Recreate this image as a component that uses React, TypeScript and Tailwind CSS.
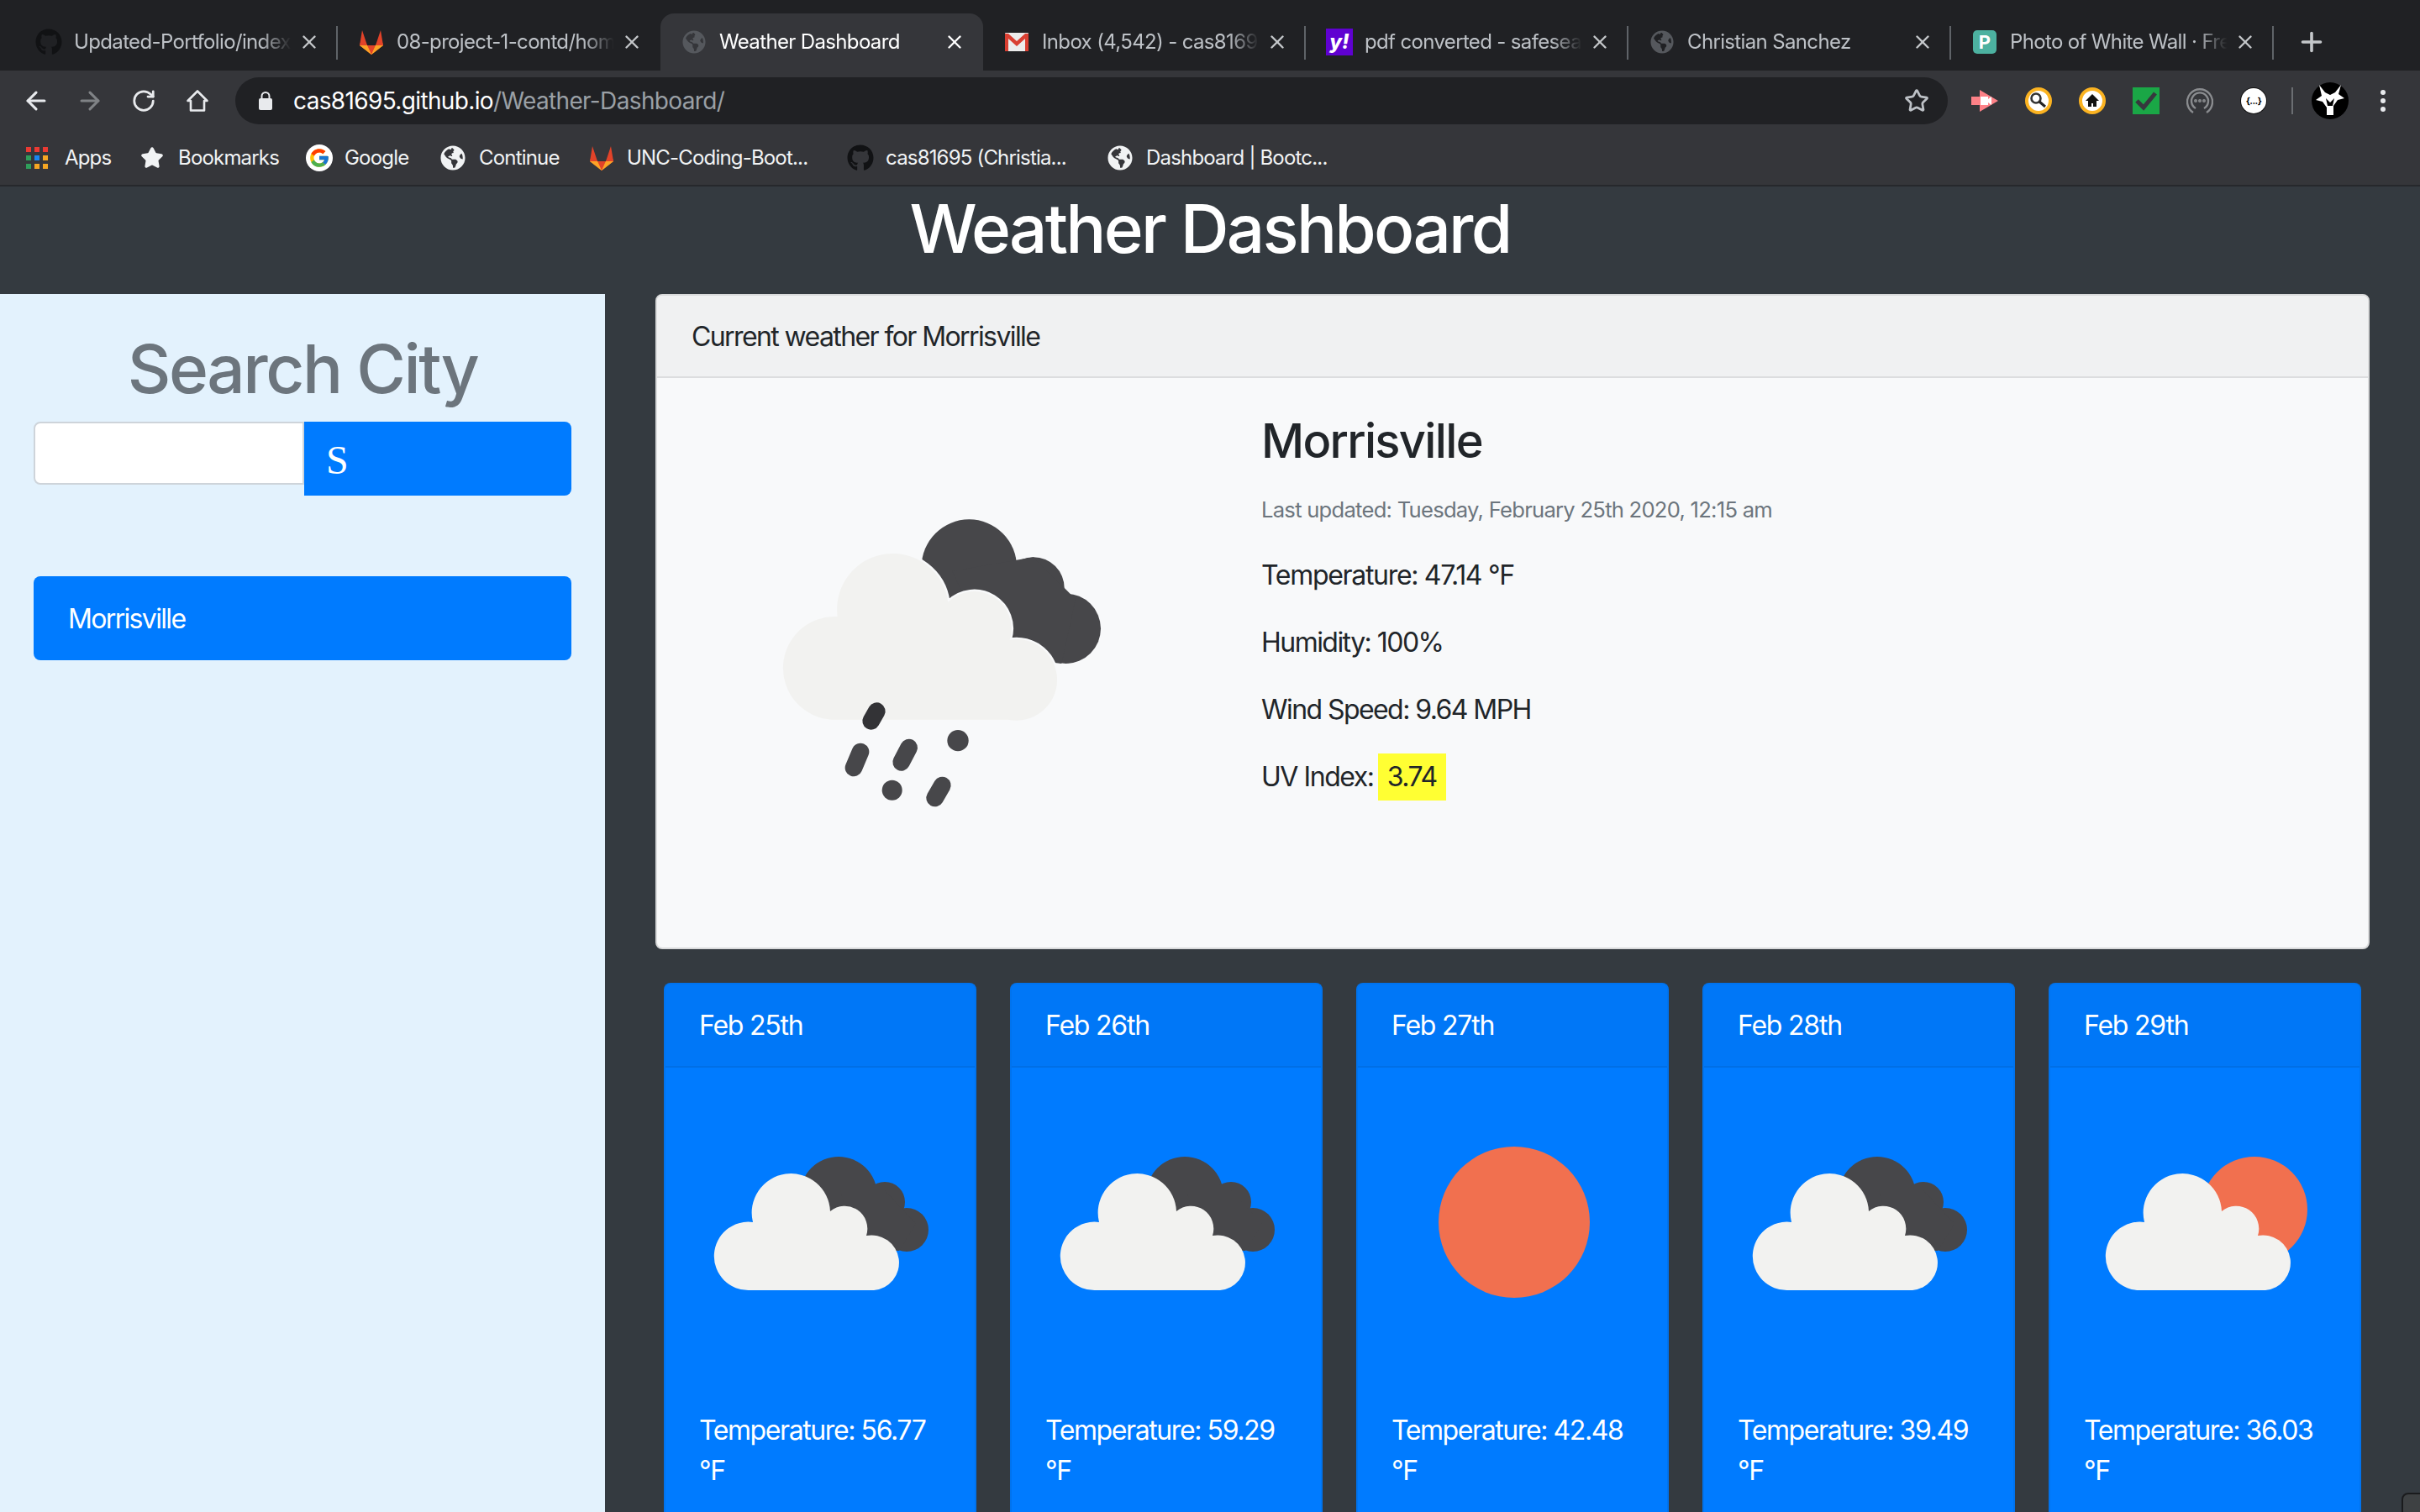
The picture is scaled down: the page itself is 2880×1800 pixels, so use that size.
import React from 'react';
import { ArrowLeft, ArrowRight, RotateCw, Star, Plus, X } from 'lucide-react';
import { FaGithub, FaGlobeAmericas } from 'react-icons/fa';
import { FcGoogle } from 'react-icons/fc';

const font = { fontFamily: 'Inter, "Liberation Sans", sans-serif' };

const GitlabIcon = ({ className }: { className?: string }) => (
  <svg viewBox="0 0 32 32" className={className}>
    <polygon points="16,31 2,20 5,10 11,20 21,20 27,10 30,20" fill="#fc6d26" />
    <polygon points="16,31 11,20 21,20" fill="#e24329" />
    <polygon points="2,20 16,31 11,20" fill="#fca326" />
    <polygon points="30,20 16,31 21,20" fill="#fca326" />
    <polygon points="5,2 11,20 2,20" fill="#e24329" />
    <polygon points="27,2 21,20 30,20" fill="#e24329" />
  </svg>
);

const GmailIcon = () => (
  <svg viewBox="0 0 28 24" className="h-[24px] w-[28px]">
    <rect x="0" y="1" width="28" height="22" rx="1" fill="#ececec" />
    <path d="M0 23V2h4l10 9 10-9h4v21h-4V8l-10 9L4 8v15z" fill="#d93f32" />
  </svg>
);

const YahooIcon = () => (
  <div className="flex h-[32px] w-[32px] items-center justify-center bg-[#5f01d1] text-[24px] font-extrabold leading-none text-white italic">
    y!
  </div>
);

const PexelsIcon = () => (
  <div className="flex h-[28px] w-[28px] items-center justify-center rounded-[5px] bg-[#4cb1a0] text-[22px] font-bold leading-none text-white">
    P
  </div>
);

const tabs = [
  { title: 'Updated-Portfolio/index', icon: <FaGithub className="h-[32px] w-[32px] text-[#111214]" /> },
  { title: '08-project-1-contd/hom', noSep: true, icon: <GitlabIcon className="h-[32px] w-[32px]" /> },
  { title: 'Weather Dashboard', active: true, noSep: true, icon: <FaGlobeAmericas className="h-[28px] w-[28px] text-[#55585d]" /> },
  { title: 'Inbox (4,542) - cas8169', icon: <GmailIcon /> },
  { title: 'pdf converted - safesea', icon: <YahooIcon /> },
  { title: 'Christian Sanchez', icon: <FaGlobeAmericas className="h-[28px] w-[28px] text-[#55585d]" /> },
  { title: 'Photo of White Wall · Fre', icon: <PexelsIcon /> },
];

const bookmarks = [
  { label: 'Apps', width: 'w-[135px]', icon: <AppsIcon /> },
  { label: 'Bookmarks', width: 'w-[198px]', icon: <Star className="h-[28px] w-[30px] fill-[#f1f3f4] text-[#f1f3f4]" /> },
  {
    label: 'Google',
    width: 'w-[160px]',
    icon: (
      <div className="flex h-[32px] w-[32px] items-center justify-center rounded-full bg-white">
        <FcGoogle className="h-[26px] w-[26px]" />
      </div>
    ),
  },
  { label: 'Continue', width: 'w-[176px]', icon: <FaGlobeAmericas className="h-[30px] w-[30px] text-[#f1f3f4]" /> },
  { label: 'UNC-Coding-Boot...', width: 'w-[308px]', icon: <GitlabIcon className="h-[32px] w-[32px]" /> },
  { label: 'cas81695 (Christia...', width: 'w-[310px]', icon: <FaGithub className="h-[32px] w-[32px] text-[#111214]" /> },
  { label: 'Dashboard | Bootc...', width: 'w-[280px]', icon: <FaGlobeAmericas className="h-[30px] w-[30px] text-[#f1f3f4]" /> },
];

function AppsIcon() {
  const colors = ['#ea3a33', '#ea3a33', '#ea3a33', '#2f9e5b', '#1a86f0', '#f5a623', '#2f9e5b', '#f5a623', '#f5a623'];
  return (
    <div className="grid h-[26px] w-[26px] grid-cols-3 gap-[4px]">
      {colors.map((c, i) => (
        <div key={i} className="h-[6px] w-[6px]" style={{ backgroundColor: c }} />
      ))}
    </div>
  );
}

const Tab = ({ title, icon, active, noSep }: { title: string; icon: React.ReactNode; active?: boolean; noSep?: boolean }) => (
  <div
    className={`relative flex h-[68px] w-[384px] shrink-0 items-center pl-[24px] ${
      active ? 'rounded-t-[16px] bg-[#35363a] text-white' : 'text-[#bdc1c6]'
    }`}
  >
    <div className="flex w-[32px] shrink-0 items-center justify-center">{icon}</div>
    <div className="ml-[14px] w-[264px] overflow-hidden whitespace-nowrap pb-[1px] text-[24px] tracking-[-0.027em] [mask-image:linear-gradient(to_right,black_84%,transparent_98%)]">
      {title}
    </div>
    <X className={`ml-[3px] h-[26px] w-[26px] shrink-0 ${active ? 'text-white' : 'text-[#c4c7ca]'}`} strokeWidth={2.2} />
    {!noSep && <div className="absolute right-0 top-[15px] h-[40px] w-[2px] bg-[#5f6368]" />}
  </div>
);

const ToolbarSlot = ({ children }: { children: React.ReactNode }) => (
  <div className="flex h-[40px] w-[64px] shrink-0 items-center justify-center">{children}</div>
);

const Toolbar = () => (
  <div className="flex h-[72px] shrink-0 items-center bg-[#35363a] pl-[11px]">
    <ToolbarSlot>
      <ArrowLeft className="h-[34px] w-[34px] text-[#e8eaed]" strokeWidth={2.2} />
    </ToolbarSlot>
    <ToolbarSlot>
      <ArrowRight className="h-[34px] w-[34px] text-[#808386]" strokeWidth={2.2} />
    </ToolbarSlot>
    <ToolbarSlot>
      <RotateCw className="h-[30px] w-[30px] text-[#e8eaed]" strokeWidth={2.2} />
    </ToolbarSlot>
    <ToolbarSlot>
      <svg viewBox="0 0 28 28" className="h-[28px] w-[28px]" fill="none" stroke="#e8eaed" strokeWidth="2.6">
        <path d="M14 2.5 2.5 14H6v11.5h16V14h3.5z" strokeLinejoin="round" />
      </svg>
    </ToolbarSlot>
    <div className="ml-[13px] flex h-[56px] w-[2038px] shrink-0 items-center rounded-full bg-[#202124] pl-[27px] pr-[22px]">
      <svg viewBox="0 0 18 24" className="h-[24px] w-[18px]">
        <path d="M4.5 10V6.5a4.5 4.5 0 0 1 9 0V10" fill="none" stroke="#e8eaed" strokeWidth="2" />
        <rect x="1" y="9" width="16" height="14" rx="2" fill="#e8eaed" />
      </svg>
      <div className="ml-[24px] whitespace-nowrap text-[28px] tracking-[-0.023em] text-white">
        cas81695.github.io<span className="text-[#9aa0a6]">/Weather-Dashboard/</span>
      </div>
      <Star className="ml-auto h-[30px] w-[30px] text-[#bdc1c6]" strokeWidth={2.2} />
    </div>
    <div className="ml-[12px] flex items-center">
      <ToolbarSlot>
        <svg viewBox="0 0 32 26" className="h-[26px] w-[32px]">
          <polygon points="0,8 10,8 10,0 32,13 10,26 10,18 0,18" fill="#fd8187" />
          <polygon points="11,8 20,8 20,18 11,18" fill="#ffffff" />
          <polygon points="20,11 24,8 24,18 20,15" fill="#ffffff" />
        </svg>
      </ToolbarSlot>
      <ToolbarSlot>
        <svg viewBox="0 0 32 32" className="h-[32px] w-[32px]">
          <circle cx="16" cy="16" r="14" fill="#fff" stroke="#fbb321" strokeWidth="4" />
          <circle cx="13" cy="13" r="5.5" fill="none" stroke="#333" strokeWidth="2.6" />
          <path d="M17 17l7 6" stroke="#222" strokeWidth="3" />
        </svg>
      </ToolbarSlot>
      <ToolbarSlot>
        <svg viewBox="0 0 32 32" className="h-[32px] w-[32px]">
          <circle cx="16" cy="16" r="14" fill="#fff" stroke="#fbb321" strokeWidth="4" />
          <path d="M16 8 8 16h3v7h4v-4h2v4h4v-7h3z" fill="#111" />
        </svg>
      </ToolbarSlot>
      <ToolbarSlot>
        <svg viewBox="0 0 32 32" className="h-[32px] w-[32px]">
          <rect width="32" height="32" fill="#1aa746" />
          <path d="M5 16l8 8L27 7" fill="none" stroke="#36383d" strokeWidth="5" />
        </svg>
      </ToolbarSlot>
      <ToolbarSlot>
        <svg viewBox="0 0 32 32" className="h-[32px] w-[32px]" fill="none" stroke="#8a8c8f" strokeWidth="2.4">
          <path d="M8 30a15 15 0 1 1 16 0" />
          <path d="M11 25a10 10 0 1 1 10 0" />
          <circle cx="11" cy="16" r="0.8" />
          <circle cx="16" cy="16" r="0.8" />
          <circle cx="21" cy="16" r="0.8" />
        </svg>
      </ToolbarSlot>
      <ToolbarSlot>
        <div className="flex h-[30px] w-[30px] items-center justify-center rounded-full bg-white text-[11px] font-bold leading-none tracking-[-0.05em] text-black shadow-[0_0_0_1px_#111]">
          {'{...}'}
        </div>
      </ToolbarSlot>
      <div className="ml-[13px] h-[32px] w-[2px] bg-[#6b6e72]" />
      <svg viewBox="0 0 44 44" className="ml-[22px] h-[44px] w-[44px]">
        <circle cx="22" cy="22" r="22" fill="#000" />
        <path d="M9 3l7 9 6 3 6-3 7-9-3 11 7 5-8 2-5 7v11h-8V30l-5-7-8-2 7-5z" fill="#fff" />
        <path d="M17 19l5 5 5-5-2 9h-6z" fill="#000" />
      </svg>
      <div className="ml-[38px] flex flex-col gap-[4px]">
        <div className="h-[6px] w-[6px] rounded-full bg-[#e8eaed]" />
        <div className="h-[6px] w-[6px] rounded-full bg-[#e8eaed]" />
        <div className="h-[6px] w-[6px] rounded-full bg-[#e8eaed]" />
      </div>
    </div>
  </div>
);

const BookmarksBar = () => (
  <div className="flex h-[66px] shrink-0 items-center border-b-2 border-[#26282c] bg-[#35363a] pl-[31px]">
    {bookmarks.map((b) => (
      <div key={b.label} className={`flex shrink-0 items-center ${b.width}`}>
        <div className="flex w-[32px] shrink-0 items-center justify-start">{b.icon}</div>
        <span className="ml-[14px] whitespace-nowrap text-[24px] tracking-[-0.034em] text-[#f1f3f4]">{b.label}</span>
      </div>
    ))}
  </div>
);

const cloudWhite = 'M42 93A40.700 40.700 0 1 1 46 12A46.700 46.700 0 1 1 138 -1A27 27 0 0 1 181 28A32.850 32.850 0 1 1 190 93Z';

const DarkCloudIcon = () => (
  <svg viewBox="0 0 288 288" className="h-[288px] w-[288px]">
    <g transform="translate(18 66)" fill="#47474a">
      <circle cx="148" cy="46" r="46" />
      <circle cx="203" cy="54" r="24" />
      <circle cx="229" cy="87" r="26" />
      <polygon points="150,40 203,40 240,80 220,112 170,110" />
      <path d={cloudWhite} transform="translate(0 66)" fill="#f2f2f0" />
    </g>
  </svg>
);

const SunCloudIcon = () => (
  <svg viewBox="0 0 288 288" className="h-[288px] w-[288px]">
    <circle cx="203" cy="129" r="63" fill="#f1704f" />
    <path d={cloudWhite} transform="translate(26 132)" fill="#f2f2f0" />
  </svg>
);

const SunIcon = () => (
  <svg viewBox="0 0 288 288" className="h-[288px] w-[288px]">
    <circle cx="146" cy="144" r="90" fill="#f1704f" />
  </svg>
);

const RainIcon = () => (
  <svg viewBox="0 0 1440 1260" className="h-[420px] w-[480px]">
    <g fill="#47474a">
      <circle cx="820" cy="285" r="170" />
      <circle cx="1050" cy="360" r="110" />
      <circle cx="1165" cy="505" r="125" />
      <polygon points="760,300 1050,250 1200,400 1150,630 900,600" />
    </g>
    <path
      d="M330 830A178 178 0 1 1 350 462A197 197 0 1 1 745 410A133 133 0 0 1 965 545A145 145 0 1 1 960 830Z"
      fill="#f2f2f0"
      stroke="#f8f9fa"
      strokeWidth="14"
      paintOrder="stroke"
    />
    <g stroke="#47474a" strokeWidth="62" strokeLinecap="round">
      <path d="M490 800 470 835" stroke="#333336" />
      <path d="M432 945 408 1002" />
      <path d="M605 930 578 982" />
      <path d="M780 905h.1" strokeWidth="76" />
      <path d="M545 1082h.1" strokeWidth="72" />
      <path d="M724 1065 698 1110" />
    </g>
  </svg>
);

const forecast = [
  { date: 'Feb 25th', temp: '56.77', icon: <DarkCloudIcon /> },
  { date: 'Feb 26th', temp: '59.29', icon: <DarkCloudIcon /> },
  { date: 'Feb 27th', temp: '42.48', icon: <SunIcon /> },
  { date: 'Feb 28th', temp: '39.49', icon: <DarkCloudIcon /> },
  { date: 'Feb 29th', temp: '36.03', icon: <SunCloudIcon /> },
];

const ForecastCard = ({ date, temp, icon }: { date: string; temp: string; icon: React.ReactNode }) => (
  <div className="h-[700px] w-[372px] shrink-0 rounded-t-[8px] border-2 border-b-0 border-[#0073ee] bg-[#007bff] text-white">
    <div className="flex h-[99px] items-center rounded-t-[6px] border-b-2 border-[#006fe6] bg-[#0077f7] pl-[40px] text-[32px] tracking-[-0.038em]">
      {date}
    </div>
    <div className="px-[40px] pt-[40px]">
      {icon}
      <p className="mt-[80px] whitespace-nowrap text-[32px] leading-[48px] tracking-[-0.044em]">
        Temperature: {temp}
        <br />
        °F
      </p>
    </div>
  </div>
);

export default function App() {
  return (
    <div style={font} className="relative flex h-[1800px] w-[2880px] flex-col overflow-hidden bg-[#343a40]">
      <div className="flex h-[84px] shrink-0 items-end bg-[#202124] pl-[18px]">
        {tabs.map((t) => (
          <Tab key={t.title} title={t.title} icon={t.icon} active={t.active} noSep={t.noSep} />
        ))}
        <Plus className="ml-[27px] mb-[16px] h-[36px] w-[36px] text-[#c4c7ca]" strokeWidth={2.4} />
      </div>
      <Toolbar />
      <BookmarksBar />

      <h1 className="h-[128px] shrink-0 pt-[2px] text-center text-[80px] font-medium leading-[96px] tracking-[-0.034em] text-white">
        Weather Dashboard
      </h1>

      <div className="flex min-h-0 flex-1 overflow-hidden">
        <aside className="w-[720px] shrink-0 bg-[#e3f2fd] px-[40px] pt-[41px]">
          <h2 className="text-center text-[80px] font-medium leading-[96px] tracking-[-0.031em] text-[#6c757d]">Search City</h2>
          <div className="mt-[15px] flex items-start">
            <input className="h-[75px] w-[322px] rounded-l-[8px] border-2 border-[#ced4da] bg-white" />
            <button
              style={{ fontFamily: '"Liberation Serif", serif' }}
              className="flex h-[88px] w-[318px] items-center rounded-r-[8px] bg-[#007bff] pl-[26px] pt-[4px] text-[48px] text-white"
            >
              S
            </button>
          </div>
          <div className="mt-[96px] flex h-[100px] items-center rounded-[8px] bg-[#007bff] pl-[41px] pt-[2px] text-[32px] tracking-[-0.052em] text-white">
            Morrisville
          </div>
        </aside>

        <main className="ml-[60px] w-[2040px] shrink-0">
          <section className="h-[780px] rounded-[8px] border-2 border-[#d9dadb] bg-[#f8f9fa] text-[#212529]">
            <div className="flex h-[98px] items-center rounded-t-[6px] border-b-2 border-[#dcdddf] bg-[#f0f1f2] pl-[41px] pt-[2px] text-[32px] tracking-[-0.05em]">
              Current weather for Morrisville
            </div>
            <div className="flex">
              <div className="ml-[98px] mt-[130px] w-[621px] shrink-0">
                <RainIcon />
              </div>
              <div className="pt-[42px]">
                <h3 className="text-[56px] font-medium leading-[67px] tracking-[-0.03em]">Morrisville</h3>
                <p className="mt-[24px] text-[25.6px] leading-[48px] tracking-[-0.029em] text-[#6c757d]">
                  Last updated: Tuesday, February 25th 2020, 12:15 am
                </p>
                <p className="mt-[30px] text-[32px] leading-[48px] tracking-[-0.041em]">Temperature: 47.14 °F</p>
                <p className="mt-[32px] text-[32px] leading-[48px] tracking-[-0.048em]">Humidity: 100%</p>
                <p className="mt-[32px] text-[32px] leading-[48px] tracking-[-0.049em]">Wind Speed: 9.64 MPH</p>
                <p className="mt-[32px] flex h-[48px] items-center text-[32px] tracking-[-0.045em]">
                  UV Index:
                  <span className="ml-[5px] flex h-[56px] items-center bg-[#ffff33] px-[11px]">3.74</span>
                </p>
              </div>
            </div>
          </section>

          <div className="mt-[40px] flex gap-[40px] px-[10px]">
            {forecast.map((f) => (
              <ForecastCard key={f.date} date={f.date} temp={f.temp} icon={f.icon} />
            ))}
          </div>
        </main>
      </div>

      <div className="absolute left-[2858px] top-[1777px] h-[30px] w-[30px] rounded-[8px] border-2 border-[#1a1b1d] bg-[#3e4143]" />
    </div>
  );
}
